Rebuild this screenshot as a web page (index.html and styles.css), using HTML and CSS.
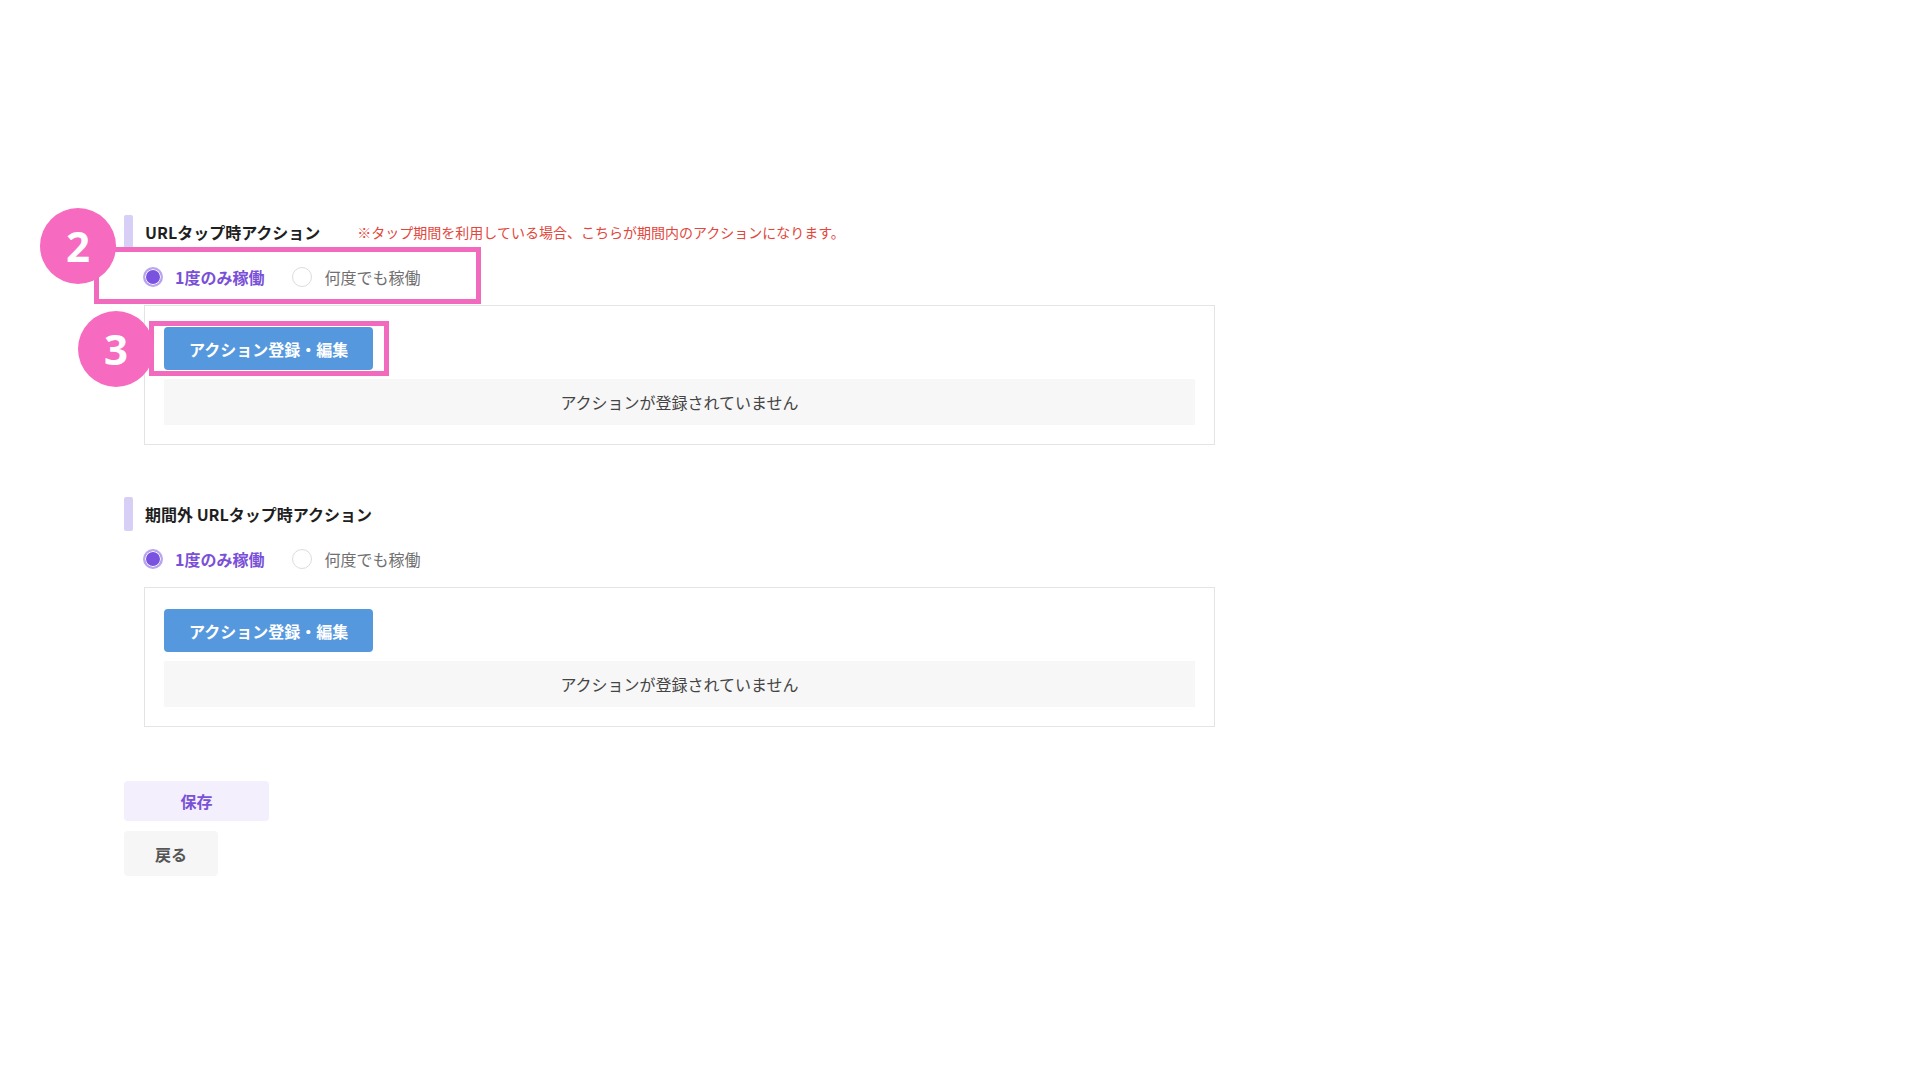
FILE: index.html
```html
<!DOCTYPE html>
<html lang="ja">
<head>
<meta charset="utf-8">
<title>URLタップ時アクション</title>
<link rel="stylesheet" href="styles.css">
</head>
<body>
<main class="page">
  <section class="section">
    <div class="title-row">
      <span class="accent"></span>
      <h2 class="title">URLタップ時アクション</h2>
      <span class="note">※タップ期間を利用している場合、こちらが期間内のアクションになります。</span>
    </div>
    <div class="radio-row">
      <label class="radio checked"><span class="dot"></span><span class="radio-label">1度のみ稼働</span></label>
      <label class="radio"><span class="dot"></span><span class="radio-label">何度でも稼働</span></label>
    </div>
    <div class="panel">
      <button class="btn-action">アクション登録・編集</button>
      <div class="empty">アクションが登録されていません</div>
    </div>
  </section>

  <section class="section section-2">
    <div class="title-row">
      <span class="accent"></span>
      <h2 class="title">期間外 URLタップ時アクション</h2>
    </div>
    <div class="radio-row">
      <label class="radio checked"><span class="dot"></span><span class="radio-label">1度のみ稼働</span></label>
      <label class="radio"><span class="dot"></span><span class="radio-label">何度でも稼働</span></label>
    </div>
    <div class="panel">
      <button class="btn-action">アクション登録・編集</button>
      <div class="empty">アクションが登録されていません</div>
    </div>
  </section>

  <div class="footer">
    <button class="btn-save">保存</button>
    <button class="btn-back">戻る</button>
  </div>

  <div class="anno-box anno-box-2"></div>
  <div class="anno-box anno-box-3"></div>
  <div class="anno-num anno-num-2">2</div>
  <div class="anno-num anno-num-3">3</div>
</main>
</body>
</html>
```

FILE: styles.css
```css
* { box-sizing: border-box; }
html, body {
  margin: 0;
  padding: 0;
  background: #ffffff;
}
body {
  font-family: "Noto Sans CJK JP", "Noto Sans", sans-serif;
  color: #222;
}
.page {
  position: relative;
  width: 1920px;
  height: 1080px;
  padding: 215px 0 0 124px;
}
.section-2 { margin-top: 52px; }
.title-row {
  display: flex;
  align-items: center;
  height: 34px;
}
.accent {
  display: block;
  width: 9px;
  height: 34px;
  background: #d7cff6;
  border-radius: 2px;
  margin-right: 12px;
}
.title {
  margin: 0;
  font-size: 16px;
  font-weight: 700;
  color: #1f1f1f;
  line-height: 1;
}
.note {
  margin-left: 37px;
  font-size: 14px;
  color: #e2463d;
  line-height: 1;
}
.radio-row {
  display: flex;
  align-items: center;
  height: 24px;
  margin-top: 16px;
  padding-left: 19px;
}
.radio {
  display: flex;
  align-items: center;
  margin-right: 28px;
  font-size: 16px;
  line-height: 1;
}
.dot {
  display: block;
  width: 20px;
  height: 20px;
  border-radius: 50%;
  border: 1px solid #dcdcdc;
  background: #fff;
  margin-right: 12px;
}
.radio.checked .dot {
  border: 2px solid #b9a6ef;
  background: #7a52e0;
  box-shadow: inset 0 0 0 1px #fff;
}
.radio-label { color: #707070; }
.radio.checked .radio-label {
  color: #7a50d8;
  font-weight: 700;
}
.panel {
  margin-top: 16px;
  margin-left: 20px;
  width: 1071px;
  border: 1px solid #e4e4e4;
  padding: 21px 19px 19px 19px;
}
.btn-action {
  display: block;
  height: 43px;
  padding: 0 25px;
  border: none;
  border-radius: 4px;
  background: #5598de;
  color: #fff;
  font-family: inherit;
  font-size: 16px;
  font-weight: 700;
}
.empty {
  margin-top: 9px;
  height: 46px;
  background: #f7f7f7;
  display: flex;
  align-items: center;
  justify-content: center;
  font-size: 16px;
  color: #444;
}
.footer {
  margin-top: 54px;
  display: flex;
  flex-direction: column;
  align-items: flex-start;
}
.btn-save, .btn-back {
  border: none;
  border-radius: 4px;
  font-family: inherit;
  font-size: 16px;
  font-weight: 700;
}
.btn-save {
  width: 145px;
  height: 40px;
  background: #f3effd;
  color: #7a52d6;
}
.btn-back {
  margin-top: 10px;
  width: 94px;
  height: 45px;
  background: #f6f6f6;
  color: #555;
}
.anno-box {
  position: absolute;
  border: 5px solid #f16abd;
}
.anno-box-2 {
  left: 94px;
  top: 247px;
  width: 387px;
  height: 57px;
}
.anno-box-3 {
  left: 149px;
  top: 321px;
  width: 240px;
  height: 55px;
}
.anno-num {
  position: absolute;
  width: 76px;
  height: 76px;
  border-radius: 50%;
  background: #f66abf;
  color: #fff;
  font-family: "Noto Sans", "Open Sans", sans-serif;
  font-size: 42px;
  font-weight: 700;
  display: flex;
  align-items: center;
  justify-content: center;
  line-height: 1;
}
.anno-num-2 { left: 40px; top: 208px; }
.anno-num-3 { left: 78px; top: 311px; }
```
